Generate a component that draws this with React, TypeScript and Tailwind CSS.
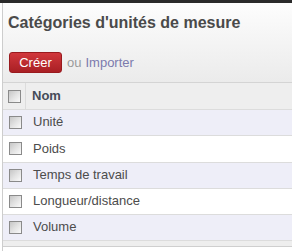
import React from "react";

const rows = ["Unité", "Poids", "Temps de travail", "Longueur/distance", "Volume"];

function Box() {
  return (
    <div className="w-[13px] h-[13px] border border-[#8a8a8a] bg-gradient-to-br from-[#c6c6c6] via-[#e2e2e2] to-[#fafafa]" />
  );
}

export default function App() {
  return (
    <div className="w-[292px] h-[251px] bg-white overflow-hidden font-['Liberation_Sans',Arial,sans-serif] text-[13px] text-[#4c4c4c]">
      <div className="h-[3px] bg-[#2a2a2a]" />
      <div className="ml-[2px] border-l border-[#cdcdcd] h-[248px] flex flex-col">
        <div className="h-[80px] border-b border-[#d4d4d4] bg-gradient-to-b from-[#fdfdfd] to-[#ebebeb] pl-[5px] pt-[11px]">
          <div className="text-[16px] leading-[18px] font-bold text-[#4a4a4a] whitespace-nowrap">
            Catégories d'unités de mesure
          </div>
          <div className="mt-[20px] flex items-center">
            <div className="ml-[1px] w-[53px] h-[21px] rounded-[3px] border border-[#991a1e] bg-gradient-to-b from-[#d1373c] to-[#a91f24] text-white flex items-center justify-center leading-none text-[13px]">
              Créer
            </div>
            <span className="ml-[5px] text-[#9a9a9a]">ou</span>
            <span className="ml-[4px] text-[#7c7bad]">Importer</span>
          </div>
        </div>
        <div className="h-[27px] flex items-center bg-[#eeeeee] border-b border-[#dcdcdc]">
          <div className="w-[23px] h-full border-r border-[#dcdcdc] flex items-center justify-center pl-[1px]">
            <Box />
          </div>
          <div className="pl-[6px] font-bold text-[#454b58]">Nom</div>
        </div>
        {rows.map((r, i) => (
          <div
            key={r}
            className={
              "h-[26.25px] flex items-center border-b border-[#dcdcdc] " +
              (i % 2 === 0 ? "bg-[#eeeef8]" : "bg-white")
            }
          >
            <div className="w-[23px] flex items-center justify-center pl-[1px]">
              <Box />
            </div>
            <div className="pl-[7px] -mt-[1px]">{r}</div>
          </div>
        ))}
        <div className="h-[6px] bg-[#eeeeee] border-b border-[#cfcfcf]" />
      </div>
    </div>
  );
}
